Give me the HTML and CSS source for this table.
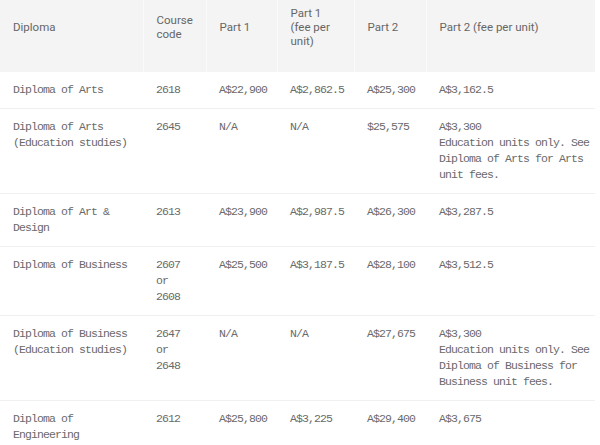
FILE: index.html
```html
<!DOCTYPE html>
<html>
<head>
<meta charset="utf-8">
<link rel="stylesheet" href="styles.css">
</head>
<body>
<table class="fees">
  <colgroup>
    <col class="c-name">
    <col class="c-code">
    <col class="c-p1">
    <col class="c-p1u">
    <col class="c-p2">
    <col class="c-p2u">
  </colgroup>
  <thead>
    <tr>
      <th>Diploma</th>
      <th>Course code</th>
      <th>Part 1</th>
      <th>Part 1 (fee per unit)</th>
      <th>Part 2</th>
      <th>Part 2 (fee per unit)</th>
    </tr>
  </thead>
  <tbody>
    <tr>
      <td>Diploma of Arts</td>
      <td>2618</td>
      <td>A$22,900</td>
      <td>A$2,862.5</td>
      <td>A$25,300</td>
      <td>A$3,162.5</td>
    </tr>
    <tr>
      <td>Diploma of Arts (Education studies)</td>
      <td>2645</td>
      <td>N/A</td>
      <td>N/A</td>
      <td>$25,575</td>
      <td>A$3,300<br>Education units only. See Diploma of Arts for Arts unit fees.</td>
    </tr>
    <tr>
      <td>Diploma of Art &amp; Design</td>
      <td>2613</td>
      <td>A$23,900</td>
      <td>A$2,987.5</td>
      <td>A$26,300</td>
      <td>A$3,287.5</td>
    </tr>
    <tr>
      <td>Diploma of Business</td>
      <td>2607 or 2608</td>
      <td>A$25,500</td>
      <td>A$3,187.5</td>
      <td>A$28,100</td>
      <td>A$3,512.5</td>
    </tr>
    <tr>
      <td>Diploma of Business (Education studies)</td>
      <td>2647 or 2648</td>
      <td>N/A</td>
      <td>N/A</td>
      <td>A$27,675</td>
      <td>A$3,300<br>Education units only. See Diploma of Business for Business unit fees.</td>
    </tr>
    <tr>
      <td>Diploma of Engineering</td>
      <td>2612</td>
      <td>A$25,800</td>
      <td>A$3,225</td>
      <td>A$29,400</td>
      <td>A$3,675</td>
    </tr>
  </tbody>
</table>
</body>
</html>
```
FILE: styles.css
```css
html, body {
  margin: 0;
  padding: 0;
  background: #ffffff;
}

.fees {
  width: 595px;
  table-layout: fixed;
  border-collapse: collapse;
  border-spacing: 0;
}

.c-name { width: 143px; }
.c-code { width: 63px; }
.c-p1 { width: 71px; }
.c-p1u { width: 77px; }
.c-p2 { width: 72px; }
.c-p2u { width: 169px; }

.fees th {
  background: #f4f4f4;
  font-family: Roboto, "Liberation Sans", sans-serif;
  font-weight: 400;
  font-size: 11.5px;
  line-height: 14px;
  color: #666;
  text-align: left;
  vertical-align: middle;
  padding: 6px 12px 24px 13px;
  border-right: 1px solid #fafafa;
  height: 42px;
}

.fees th:last-child {
  border-right: none;
}

.fees td {
  font-family: "Liberation Mono", "DejaVu Sans Mono", monospace;
  font-size: 11.5px;
  letter-spacing: -0.9px;
  line-height: 16px;
  color: #6a6a6a;
  vertical-align: top;
  text-align: left;
  padding: 10px 12px 10px 13px;
  border-bottom: 1px solid #f0f0f0;
}

.fees td:last-child {
  padding-right: 4px;
}
```
